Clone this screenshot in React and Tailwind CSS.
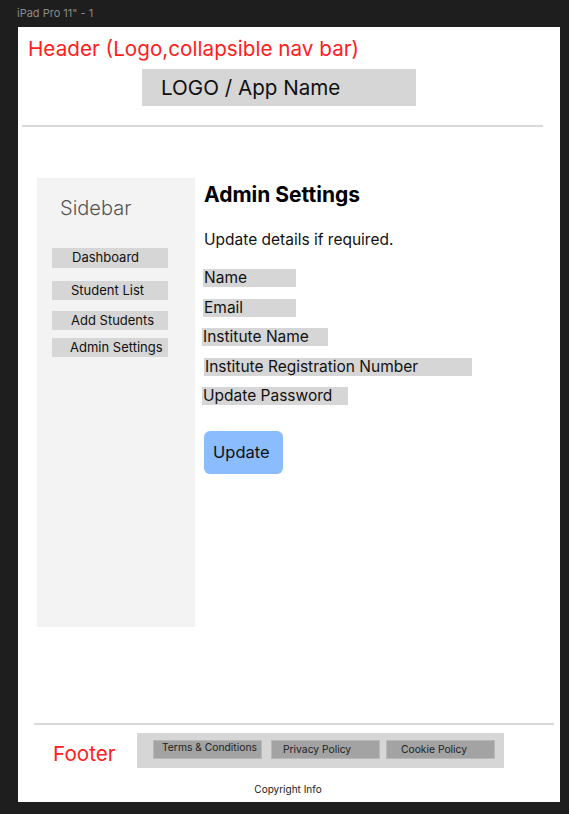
import React from "react";

const navItems = [
  { label: "Dashboard", mt: "mt-[28px]", h: "h-[20px]", pl: "pl-[20px]" },
  { label: "Student List", mt: "mt-[13px]", h: "h-[19px]", pl: "pl-[19px]" },
  { label: "Add Students", mt: "mt-[11px]", h: "h-[19px]", pl: "pl-[19px]" },
  { label: "Admin Settings", mt: "mt-[8px]", h: "h-[19px]", pl: "pl-[18px]" },
];

const fields = [
  { label: "Name", w: "w-[93px]", mt: "mt-[19px]", ml: "ml-[-1px]" },
  { label: "Email", w: "w-[93px]", mt: "mt-[12px]", ml: "ml-[-1px]" },
  { label: "Institute Name", w: "w-[126px]", mt: "mt-[11px]", ml: "ml-[-2px]" },
  { label: "Institute Registration Number", w: "w-[268px]", mt: "mt-[12px]", ml: "ml-0" },
  { label: "Update Password", w: "w-[146px]", mt: "mt-[11px]", ml: "ml-[-2px]" },
];

const footerLinks = [
  { label: "Terms & Conditions", ml: "ml-0", align: "items-start", pl: "pl-[8px]" },
  { label: "Privacy Policy", ml: "ml-[9px]", align: "items-center", pl: "pl-[11px]" },
  { label: "Cookie Policy", ml: "ml-[6px]", align: "items-center", pl: "pl-[14px]" },
];

export default function App() {
  return (
    <div className="w-[569px] h-[814px] bg-[#1e1e1e] font-['Inter',sans-serif] overflow-hidden">
      <p className="pl-[17px] pt-[5px] h-[27px] text-[11px] leading-[16px] text-[#8a8a8a]">
        iPad Pro 11" - 1
      </p>

      <div className="ml-[18px] w-[542px] h-[775px] bg-white flex flex-col">
        {/* ── Header ─────────────────────────────── */}
        <p className="pl-[10px] pt-[10px] text-[20.7px] leading-[24px] text-[#ff2020]">
          Header (Logo,collapsible nav bar)
        </p>
        <div className="ml-[124px] mt-[8px] w-[274px] h-[37px] bg-[#d6d6d6] flex items-center pl-[19px] pt-[2px] text-[20.6px] text-[#111]">
          LOGO / App Name
        </div>
        <div className="ml-[4px] mt-[19px] w-[521px] h-[2px] bg-[#d9d9d9]" />

        {/* ── Body ───────────────────────────────── */}
        <div className="mt-[51px] flex">
          <aside className="ml-[19px] w-[158px] h-[449px] bg-[#f4f3f3] flex flex-col">
            <p className="pl-[23px] pt-[18px] text-[20px] leading-[24px] font-light text-[#555]">
              Sidebar
            </p>
            {navItems.map((item) => (
              <div
                key={item.label}
                className={`ml-[15px] ${item.mt} w-[116px] ${item.h} bg-[#d6d6d6] flex items-center ${item.pl} text-[13px] text-[#111]`}
              >
                {item.label}
              </div>
            ))}
          </aside>

          <main className="ml-[9px] flex flex-col items-start">
            <h1 className="mt-[3px] text-[21px] leading-[28px] font-bold text-black">
              Admin Settings
            </h1>
            <p className="mt-[21px] text-[15.5px] leading-[20px] text-[#111]">
              Update details if required.
            </p>
            {fields.map((f) => (
              <div
                key={f.label}
                className={`${f.mt} ${f.ml} ${f.w} h-[18px] bg-[#d6d6d6] flex items-center pl-[1px] text-[15.5px] text-[#111] whitespace-nowrap`}
              >
                {f.label}
              </div>
            ))}
            <button className="mt-[26px] w-[79px] h-[43px] rounded-[6px] bg-[#8bbcfd] text-[16.5px] text-[#111] flex items-center pl-[9px]">
              Update
            </button>
          </main>
        </div>

        {/* ── Footer ─────────────────────────────── */}
        <div className="mt-auto flex flex-col">
          <div className="ml-[16px] w-[520px] h-[2px] bg-[#d9d9d9]" />
          <div className="mt-[8px] flex items-center">
            <p className="ml-[35px] w-[84px] text-[20.7px] leading-[24px] text-[#ff2020] pt-[6px]">
              Footer
            </p>
            <div className="w-[367px] h-[35px] bg-[#d6d6d6] flex items-start pt-[7px] pl-[16px]">
              {footerLinks.map((l) => (
                <div
                  key={l.label}
                  className={`${l.ml} w-[109px] h-[19px] bg-[#a3a3a3] border border-[#b8b8b8] flex ${l.align} ${l.pl} text-[10.3px] leading-[13px] text-[#222] whitespace-nowrap`}
                >
                  {l.label}
                </div>
              ))}
            </div>
          </div>
          <p className="mt-[15px] mb-[6px] text-center pr-[2px] text-[10px] leading-[13px] text-[#222]">
            Copyright Info
          </p>
        </div>
      </div>
    </div>
  );
}
